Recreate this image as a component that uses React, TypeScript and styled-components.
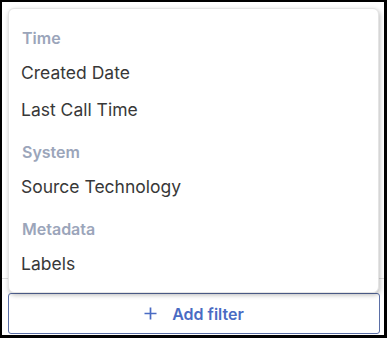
import * as React from 'react';
import styled, { createGlobalStyle } from 'styled-components';

const GlobalStyle = createGlobalStyle`
html, body {
    margin: 0;
    padding: 0;
    background: #000;
}
body {
    font-family: Inter, "Noto Sans", "Liberation Sans", sans-serif;
}
`;

const Frame = styled.div`
box-sizing: border-box;
width: 387px;
height: 338px;
border-style: solid;
border-color: #000;
border-width: 2px 3px 3px 2px;
background: #fff;
position: relative;
display: flex;
flex-direction: column;
`;

const FilterArea = styled.div`
height: 276px;
border-bottom: 1px solid #dcdcdc;
flex-shrink: 0;
`;

const AddButton = styled.button`
display: flex;
align-items: center;
justify-content: center;
gap: 15px;
margin: 14px 4px 0 6px;
height: 41px;
border: 1px solid #5b6fa6;
border-radius: 3px;
background: #fff;
color: #4a6bc3;
font-family: inherit;
font-size: 16px;
font-weight: 600;
cursor: pointer;
svg {
    display: block;
}
`;

const Menu = styled.div`
position: absolute;
top: 6px;
left: 6px;
width: 371px;
box-sizing: border-box;
padding: 5px 0 10px;
background: #fff;
border: 1px solid #e4e4e4;
border-radius: 6px;
box-shadow: 1px 2px 5px rgba(0, 0, 0, 0.28);
`;

const GroupTitle = styled.div`
padding: 14px 13px 6px;
line-height: 20px;
font-size: 16px;
font-weight: 600;
color: #9ba5ba;
`;

const Item = styled.div`
padding: 8px 12px;
line-height: 21px;
font-size: 17.5px;
color: #383838;
cursor: pointer;
&:hover {
    background: #f4f6fa;
}
`;

const groups: { title: string; items: string[] }[] = [
    { title: 'Time', items: ['Created Date', 'Last Call Time'] },
    { title: 'System', items: ['Source Technology'] },
    { title: 'Metadata', items: ['Labels'] },
];

const PlusIcon = () => (
    <svg width="13" height="13" viewBox="0 0 13 13">
        <path d="M6.5 0.5v12M0.5 6.5h12" stroke="currentColor" strokeWidth="1.7" />
    </svg>
);

const App: React.FC = () => {
    return (<>
        <GlobalStyle />
        <Frame>
            <FilterArea />
            <AddButton>
                <PlusIcon />
                <span>Add filter</span>
            </AddButton>
            <Menu>
                {groups.map(g => (
                    <React.Fragment key={g.title}>
                        <GroupTitle>{g.title}</GroupTitle>
                        {g.items.map(i => <Item key={i}>{i}</Item>)}
                    </React.Fragment>
                ))}
            </Menu>
        </Frame>
    </>)
}
export default App
